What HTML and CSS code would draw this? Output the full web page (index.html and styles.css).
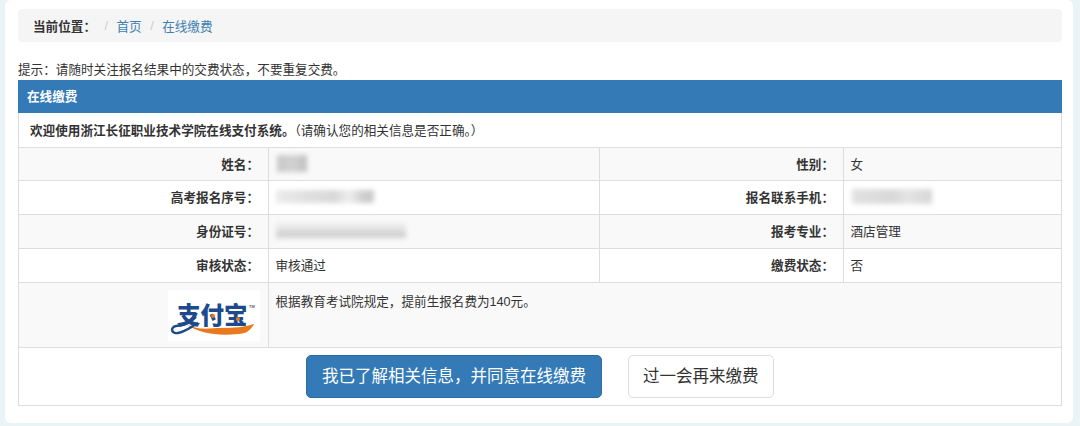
FILE: index.html
```html
<!DOCTYPE html>
<html lang="zh-CN">

<head>
    <meta charset="UTF-8">
    <meta name="viewport" content="width=device-width, initial-scale=1.0">
    <title>在线缴费</title>
    <link rel="stylesheet" href="styles.css">
</head>

<body>
    <div class="panel">
        <ol class="breadcrumb">
            <li class="crumb-label">当前位置：</li>
            <li class="sep">/</li>
            <li><a href="#">首页</a></li>
            <li class="sep">/</li>
            <li><a href="#">在线缴费</a></li>
        </ol>
        <p class="tip">提示：请随时关注报名结果中的交费状态，不要重复交费。</p>
        <table class="pay-table">
            <colgroup>
                <col class="col-a">
                <col class="col-b">
                <col class="col-c">
                <col class="col-d">
            </colgroup>
            <tr class="head-row">
                <th colspan="4">在线缴费</th>
            </tr>
            <tr class="welcome-row">
                <td colspan="4"><b>欢迎使用浙江长征职业技术学院在线支付系统。</b>（请确认您的相关信息是否正确。）</td>
            </tr>
            <tr class="info-row first-row grey">
                <th>姓名：</th>
                <td><span class="blur blur-name"></span></td>
                <th>性别：</th>
                <td>女</td>
            </tr>
            <tr class="info-row">
                <th>高考报名序号：</th>
                <td><span class="blur blur-no"></span></td>
                <th>报名联系手机：</th>
                <td><span class="blur blur-phone"></span></td>
            </tr>
            <tr class="info-row grey">
                <th>身份证号：</th>
                <td><span class="blur blur-id"></span></td>
                <th>报考专业：</th>
                <td>酒店管理</td>
            </tr>
            <tr class="info-row">
                <th>审核状态：</th>
                <td>审核通过</td>
                <th>缴费状态：</th>
                <td>否</td>
            </tr>
            <tr class="logo-row grey">
                <th>
                    <div class="logo">
                        <svg width="92" height="51" viewBox="0 0 92 51">
                            <rect width="92" height="51" fill="#fff" />
                            <!-- orange swoosh under the name -->
                            <path d="M18 34 C32 41 40 38 54 38 C66 38 76 37 86 34 C83 40 78 44 70 44 C50 46 32 44 18 34 Z" fill="#e8791c" />
                            <!-- loop of the first character -->
                            <path d="M28 27 C20 35 13 36 8 36 C2 37 3 44 10 43 C18 42 24 36 30 33" fill="none" stroke="#1d4a8c" stroke-width="2.4" />
                            <text class="logo-text" x="9" y="34">支付宝</text>
                            <circle cx="45" cy="26" r="2" fill="#e8791c" />
                            <circle cx="70" cy="29" r="2" fill="#e8791c" />
                            <text class="logo-tm" x="81" y="18">TM</text>
                        </svg>
                    </div>
                </th>
                <td colspan="3" class="fee">根据教育考试院规定，提前生报名费为140元。</td>
            </tr>
            <tr class="btn-row">
                <td colspan="4">
                    <div class="btns">
                        <a href="#" class="btn btn-primary">我已了解相关信息，并同意在线缴费</a>
                        <a href="#" class="btn btn-default">过一会再来缴费</a>
                    </div>
                </td>
            </tr>
        </table>
    </div>
</body>

</html>
```

FILE: styles.css
```css
* {
    box-sizing: border-box;
}

html,
body {
    height: 100%;
}

body {
    margin: 0;
    background: #eaf3f5;
    font-family: "Liberation Sans", "Noto Sans CJK SC", sans-serif;
    font-size: 12.6px;
    color: #333;
    overflow: hidden;
}

.panel {
    margin: 0 7px 0 5px;
    height: 423px;
    padding: 9px 11px 0 13px;
    background: #fff;
    border-radius: 6px;
}

.breadcrumb {
    display: flex;
    align-items: center;
    gap: 8.5px;
    height: 33px;
    margin: 0;
    padding: 0 15px;
    list-style: none;
    background: #f5f5f5;
    border-radius: 4px;
}

.crumb-label {
    font-weight: bold;
}

.sep {
    color: #ccc;
}

.breadcrumb a {
    color: #3d7fb0;
    text-decoration: none;
}

.tip {
    height: 18px;
    margin: 19px 0 1px;
    line-height: 18px;
}

.pay-table {
    width: 100%;
    table-layout: fixed;
    border-collapse: collapse;
}

.col-a {
    width: 250px;
}

.col-b {
    width: 331px;
}

.col-c {
    width: 244px;
}

.pay-table td,
.pay-table th {
    padding: 0 7px 2px 6.5px;
    border: 1px solid #ddd;
}

.pay-table .head-row th {
    height: 32px;
    padding-left: 8px;
    text-align: left;
    color: #fff;
    background: #337ab7;
    border-color: #337ab7;
}

.pay-table .welcome-row td {
    height: 35px;
    padding-left: 11px;
}

.info-row td,
.info-row th {
    height: 34px;
}

.first-row td,
.first-row th {
    height: 33px;
}

.pay-table .info-row th,
.pay-table .logo-row th {
    text-align: right;
    padding-right: 9px;
}

.grey td,
.grey th {
    background: #f9f9f9;
}

.pay-table .logo-row th {
    height: 65px;
    padding-bottom: 0;
}

.logo {
    display: flex;
    justify-content: flex-end;
    margin-right: -1px;
}

.logo svg {
    display: block;
}

.logo-text {
    font-family: "Noto Sans CJK SC", sans-serif;
    font-size: 23.5px;
    font-weight: 900;
    fill: #1d4a8c;
}

.logo-tm {
    font-size: 4px;
    fill: #666;
}

.pay-table .fee {
    vertical-align: top;
    padding-top: 8px;
}

.pay-table .btn-row td {
    height: 58px;
    padding-bottom: 0;
}

.btns {
    display: flex;
    justify-content: center;
    gap: 26px;
}

.btn {
    display: block;
    height: 43px;
    padding: 0 15px;
    line-height: 41px;
    font-size: 16.5px;
    text-decoration: none;
    border: 1px solid transparent;
    border-radius: 5px;
}

.btn-primary {
    color: #fff;
    background: #337ab7;
    border-color: #2e6da4;
}

.btn-default {
    padding: 0 14px;
    color: #333;
    background: #fff;
    border-color: #ddd;
}

.blur {
    display: block;
    filter: blur(2.5px);
}

.blur-name {
    width: 30px;
    height: 17px;
    margin-left: 1px;
    background: linear-gradient(90deg, #c6c6c6, #d2d2d2 50%, #c0c0c0);
}

.blur-no {
    width: 98px;
    height: 13px;
    background: linear-gradient(90deg, #ebebeb, #e0e0e0 30%, #d8d8d8 60%, #eee 75%, #cccccc 90%);
}

.blur-id {
    width: 130px;
    height: 15px;
    background: linear-gradient(180deg, #ebebeb 30%, #d2d2d2 65%);
}

.blur-phone {
    width: 80px;
    height: 15px;
    margin-left: 1px;
    background: linear-gradient(90deg, #e2e2e2, #d8d8d8 50%, #e4e4e4 70%, #d6d6d6);
}
```
